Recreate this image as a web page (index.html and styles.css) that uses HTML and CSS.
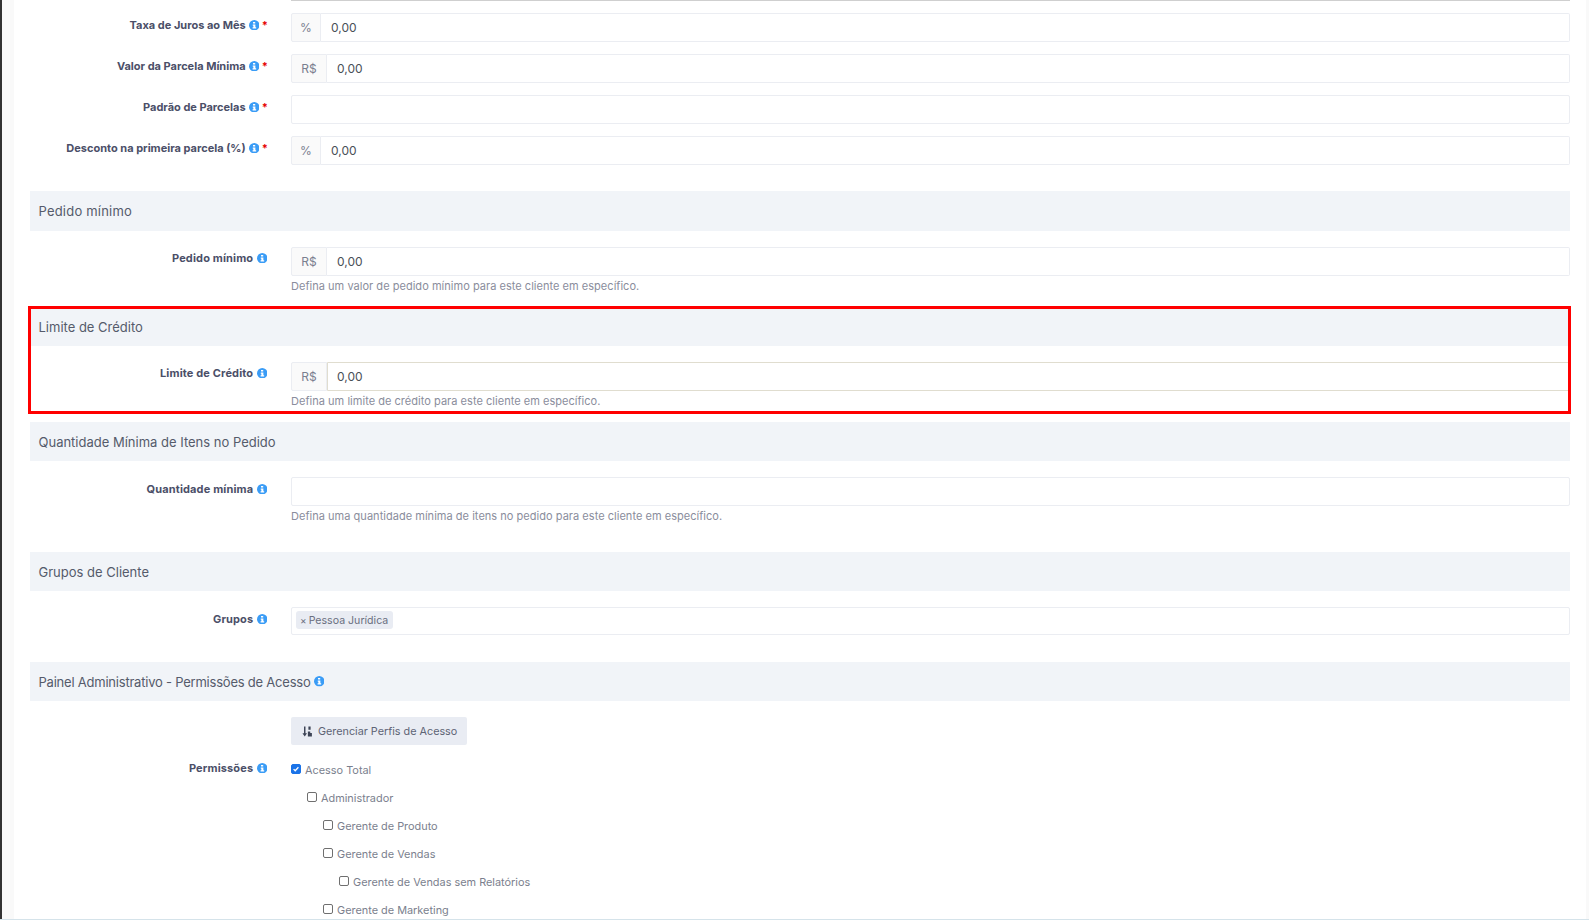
FILE: index.html
```html
<!DOCTYPE html>
<html lang="pt-BR">
<head>
<meta charset="utf-8">
<title>Cliente</title>
<link rel="stylesheet" href="styles.css">
</head>
<body>
<svg class="defs" width="0" height="0" aria-hidden="true">
  <symbol id="info" viewBox="0 0 12 12">
    <circle cx="6" cy="6" r="6" fill="#3a9cf6"/>
    <path d="M4.6 2.2h2.5v1.8H4.6zM4.3 5h3v3.2h.9v1.6H4.1V8.2h.9V6.6h-.7z" fill="#fff"/>
  </symbol>
</svg>
<div class="page">
  <div class="rail"></div>
  <main class="content">
    <div class="topline"></div>

    <div class="row row-first">
      <div class="label label-req">Taxa de Juros ao Mês <svg class="info"><use href="#info"/></svg> <span class="req">*</span></div>
      <div class="group"><span class="addon addon-pct">%</span><span class="input">0,00</span></div>
    </div>
    <div class="row">
      <div class="label label-req">Valor da Parcela Mínima <svg class="info"><use href="#info"/></svg> <span class="req">*</span></div>
      <div class="group"><span class="addon">R$</span><span class="input">0,00</span></div>
    </div>
    <div class="row">
      <div class="label label-req">Padrão de Parcelas <svg class="info"><use href="#info"/></svg> <span class="req">*</span></div>
      <div class="group"><span class="input"></span></div>
    </div>
    <div class="row">
      <div class="label label-req">Desconto na primeira parcela (%) <svg class="info"><use href="#info"/></svg> <span class="req">*</span></div>
      <div class="group"><span class="addon addon-pct">%</span><span class="input">0,00</span></div>
    </div>

    <section class="sect sect-pedido">
      <h2 class="head">Pedido mínimo</h2>
      <div class="row row-help">
        <div class="label">Pedido mínimo <svg class="info"><use href="#info"/></svg></div>
        <div>
          <div class="group"><span class="addon">R$</span><span class="input">0,00</span></div>
          <p class="help">Defina um valor de pedido mínimo para este cliente em específico.</p>
        </div>
      </div>
    </section>

    <section class="sect sect-limite">
      <div class="mark"></div>
      <h2 class="head">Limite de Crédito</h2>
      <div class="row row-help">
        <div class="label">Limite de Crédito <svg class="info"><use href="#info"/></svg></div>
        <div>
          <div class="group group-beige"><span class="addon">R$</span><span class="input">0,00</span></div>
          <p class="help">Defina um limite de crédito para este cliente em específico.</p>
        </div>
      </div>
    </section>

    <section class="sect sect-qtd">
      <h2 class="head">Quantidade Mínima de Itens no Pedido</h2>
      <div class="row row-help">
        <div class="label">Quantidade mínima <svg class="info"><use href="#info"/></svg></div>
        <div>
          <div class="group"><span class="input"></span></div>
          <p class="help">Defina uma quantidade mínima de itens no pedido para este cliente em específico.</p>
        </div>
      </div>
    </section>

    <section class="sect sect-grupos">
      <h2 class="head">Grupos de Cliente</h2>
      <div class="row row-help">
        <div class="label">Grupos <svg class="info"><use href="#info"/></svg></div>
        <div class="group group-tags"><span class="tag"><span class="tag-x">×</span> Pessoa Jurídica</span></div>
      </div>
    </section>

    <section class="sect sect-painel">
      <h2 class="head head-painel">Painel Administrativo - Permissões de Acesso <svg class="info info-head"><use href="#info"/></svg></h2>
      <div class="row row-btn">
        <div></div>
        <div><span class="btn">
          <svg class="btn-icon" viewBox="0 0 12 12"><path d="M2.2 .6h1.6v7.4h1.7L3 11.4.5 8h1.7zM7 .6h2.4v3.6H7zM6.4 6h2.6v1.6h1.8v3.8H6.4z" fill="#3d4456"/></svg>
          Gerenciar Perfis de Acesso</span></div>
      </div>
      <div class="row row-perm">
        <div class="label">Permissões <svg class="info"><use href="#info"/></svg></div>
        <ul class="tree">
          <li class="check"><span class="box box-on"><svg viewBox="0 0 10 10"><path d="M2 5.2l2 2 4-4.4" fill="none" stroke="#fff" stroke-width="1.6"/></svg></span>Acesso Total</li>
          <li class="check lvl1"><span class="box"></span>Administrador</li>
          <li class="check lvl2"><span class="box"></span>Gerente de Produto</li>
          <li class="check lvl2"><span class="box"></span>Gerente de Vendas</li>
          <li class="check lvl3"><span class="box"></span>Gerente de Vendas sem Relatórios</li>
          <li class="check lvl2"><span class="box"></span>Gerente de Marketing</li>
        </ul>
      </div>
    </section>
  </main>
  <div class="gutter"></div>
</div>
<div class="bottomline"></div>
</body>
</html>
```
FILE: styles.css
```css
* { box-sizing: border-box; }
html, body { margin: 0; padding: 0; height: 920px; overflow: hidden; background: #fff; }
body { font-family: Inter, "Noto Sans", "Liberation Sans", sans-serif; color: #495057; position: relative; }
.defs { position: absolute; }
.page { display: flex; height: 920px; overflow: hidden; }
.rail { width: 14px; flex: none; background: #f9f9f9; border-left: 2px solid #333; }
.gutter { width: 3px; flex: none; background: #f9f9f9; }
.content { flex: 1; padding: 0 16px; min-width: 0; }
.topline { height: 1px; margin-left: 261px; background: #cfcfcf; }

.row { display: grid; grid-template-columns: 237px 1fr; column-gap: 24px; margin-bottom: 12px; }
.row-first { margin-top: 12px; }
.label { font-size: 11px; font-weight: 700; color: #4b4f68; text-align: right; line-height: 14px; padding-top: 5px; letter-spacing: .14px; }
.label-req { letter-spacing: 0; }
.info { width: 10.5px; height: 10.5px; vertical-align: -1px; margin-left: .5px; }
.req { color: #e60000; margin-right: -1px; }

.group { display: flex; height: 29px; min-width: 0; }
.addon { flex: none; width: 36px; background: #fafafa; border: 1px solid #ebedf2; border-radius: 2px 0 0 2px; font-size: 12px; color: #7a7f90; display: flex; align-items: center; justify-content: center; }
.addon-pct { width: 30px; }
.input { flex: 1; background: #fff; border: 1px solid #ebedf2; border-left-width: 0; border-radius: 0 2px 2px 0; font-size: 12px; color: #495057; display: flex; align-items: center; padding-left: 10px; }
.group > .input:first-child { border-left-width: 1px; border-radius: 2px; }
.group-beige .input { border-color: #e0ddcf; border-left-width: 1px; padding-left: 9px; }

.sect { position: relative; }
.sect-pedido { margin-top: 26px; }
.sect-limite { margin-top: 14px; }
.sect-qtd { margin-top: 14px; }
.sect-grupos { margin-top: 29px; }
.sect-painel { margin-top: 27px; }
.head { margin: 0 0 16px; height: 39px; background: #f1f4f8; font-size: 13px; font-weight: 400; color: #555b6b; padding: 0 8.5px; display: flex; align-items: center; gap: 3px; }
.sect-pedido .head { height: 40px; letter-spacing: .2px; }
.sect-pedido .label { padding-top: 4px; }
.sect-limite .label { padding-top: 4px; }
.head-painel { letter-spacing: -.22px; }
.info-head { margin-left: 0; }
.row-help { margin-bottom: 0; }
.help { margin: 3px 0 0; font-size: 11px; line-height: 14px; color: #8a8d9c; letter-spacing: .03px; }
.mark { position: absolute; left: -2px; right: -1px; top: -1px; bottom: -6px; border: 3px solid #f00; z-index: 2; pointer-events: none; }

.group-tags { border: 1px solid #ebedf2; border-radius: 2px; padding: 3px 4px 4px; height: 28px; }
.tag { background: #e9ecf3; border-radius: 3px; font-size: 10.6px; color: #6a6f80; padding: 0 5px 0 4px; display: inline-flex; align-items: center; gap: 2px; height: 18px; }
.tag-x { font-size: 10px; }

.row-btn { margin-bottom: 0; }
.btn { display: inline-flex; align-items: center; gap: 5px; height: 28px; padding: 0 10px 0 11px; background: #e9ecf3; border-radius: 2px; font-size: 10.8px; color: #5e6475; }
.btn-icon { width: 11px; height: 11px; }
.row-perm { margin-top: 0; margin-bottom: 0; }
.row-perm .label { padding-top: 16px; }
.tree { list-style: none; margin: 11px 0 0; padding: 0; font-size: 10.9px; color: #7b7f8e; }
.check { display: flex; align-items: center; gap: 4px; height: 28px; }
.lvl1 { padding-left: 16px; }
.lvl2 { padding-left: 32px; }
.lvl3 { padding-left: 48px; }
.box { width: 10px; height: 10px; flex: none; border: 1px solid #6f6f6f; border-radius: 2px; background: #fff; position: relative; top: -1px; }
.box-on { background: #1a73e8; border-color: #1a73e8; display: flex; }
.box-on svg { width: 8px; height: 8px; }

.bottomline { position: absolute; left: 0; right: 0; bottom: 0; height: 1px; background: #d5e3ea; }
```
